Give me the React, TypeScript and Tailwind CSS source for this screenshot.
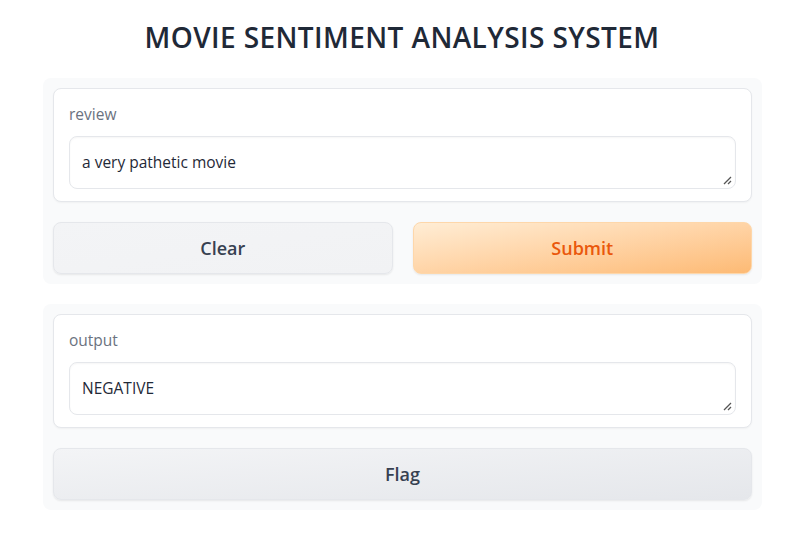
import React from "react";

function ResizeGrip() {
  return (
    <svg className="absolute right-[3px] bottom-[3px]" width="9" height="9" viewBox="0 0 9 9">
      <path d="M1 8 L8 1 M5 8 L8 5" stroke="#555" strokeWidth="1.3" />
    </svg>
  );
}

function TextField({ label, value }: { label: string; value: string }) {
  return (
    <div className="bg-white border border-[#e5e7eb] rounded-[8px] px-[15px] pt-[15px] pb-[12px] shadow-[0_1px_2px_rgba(0,0,0,0.04)]">
      <div className="text-[15.5px] leading-[20px] text-[#6b7280] mb-[12px]">{label}</div>
      <div className="relative h-[53px] border border-[#e5e7eb] rounded-[8px] bg-white px-[12px] pt-[15px] text-[15.5px] leading-[20px] text-[#1f2937] shadow-[inset_0_1px_2px_rgba(0,0,0,0.04)]">
        {value}
        <ResizeGrip />
      </div>
    </div>
  );
}

export default function App() {
  return (
    <div className="w-[801px] h-[542px] bg-white font-['Open_Sans',sans-serif]">
      <h1 className="text-center text-[28px] leading-[36px] font-semibold text-[#1f2937] tracking-[0.4px] pt-[19px] pb-[23px] pl-[3px]">
        MOVIE SENTIMENT ANALYSIS SYSTEM
      </h1>
      <div className="ml-[43px] w-[719px] flex flex-col gap-[20px]">
        <div className="bg-[#f9fafb] rounded-[8px] p-[10px] flex flex-col gap-[20px]">
          <TextField label="review" value="a very pathetic movie" />
          <div className="flex gap-[20px]">
            <button className="flex-1 h-[52px] rounded-[8px] border border-[#e5e7eb] bg-gradient-to-br from-[#f3f4f6] to-[#f1f2f4] text-[18px] font-semibold text-[#374151] shadow-[0_1px_2px_rgba(0,0,0,0.08)]">
              Clear
            </button>
            <button className="flex-1 h-[52px] rounded-[8px] border border-[#fed7aa] bg-gradient-to-br from-[#ffedd5] to-[#fdba74] text-[18px] font-semibold text-[#ea580c] shadow-[0_1px_2px_rgba(0,0,0,0.08)]">
              Submit
            </button>
          </div>
        </div>
        <div className="bg-[#f9fafb] rounded-[8px] p-[10px] flex flex-col gap-[20px]">
          <TextField label="output" value="NEGATIVE" />
          <button className="h-[52px] rounded-[8px] border border-[#e5e7eb] bg-gradient-to-br from-[#f3f4f6] to-[#e5e7eb] text-[18px] font-semibold text-[#374151] shadow-[0_1px_2px_rgba(0,0,0,0.08)]">
            Flag
          </button>
        </div>
      </div>
    </div>
  );
}
